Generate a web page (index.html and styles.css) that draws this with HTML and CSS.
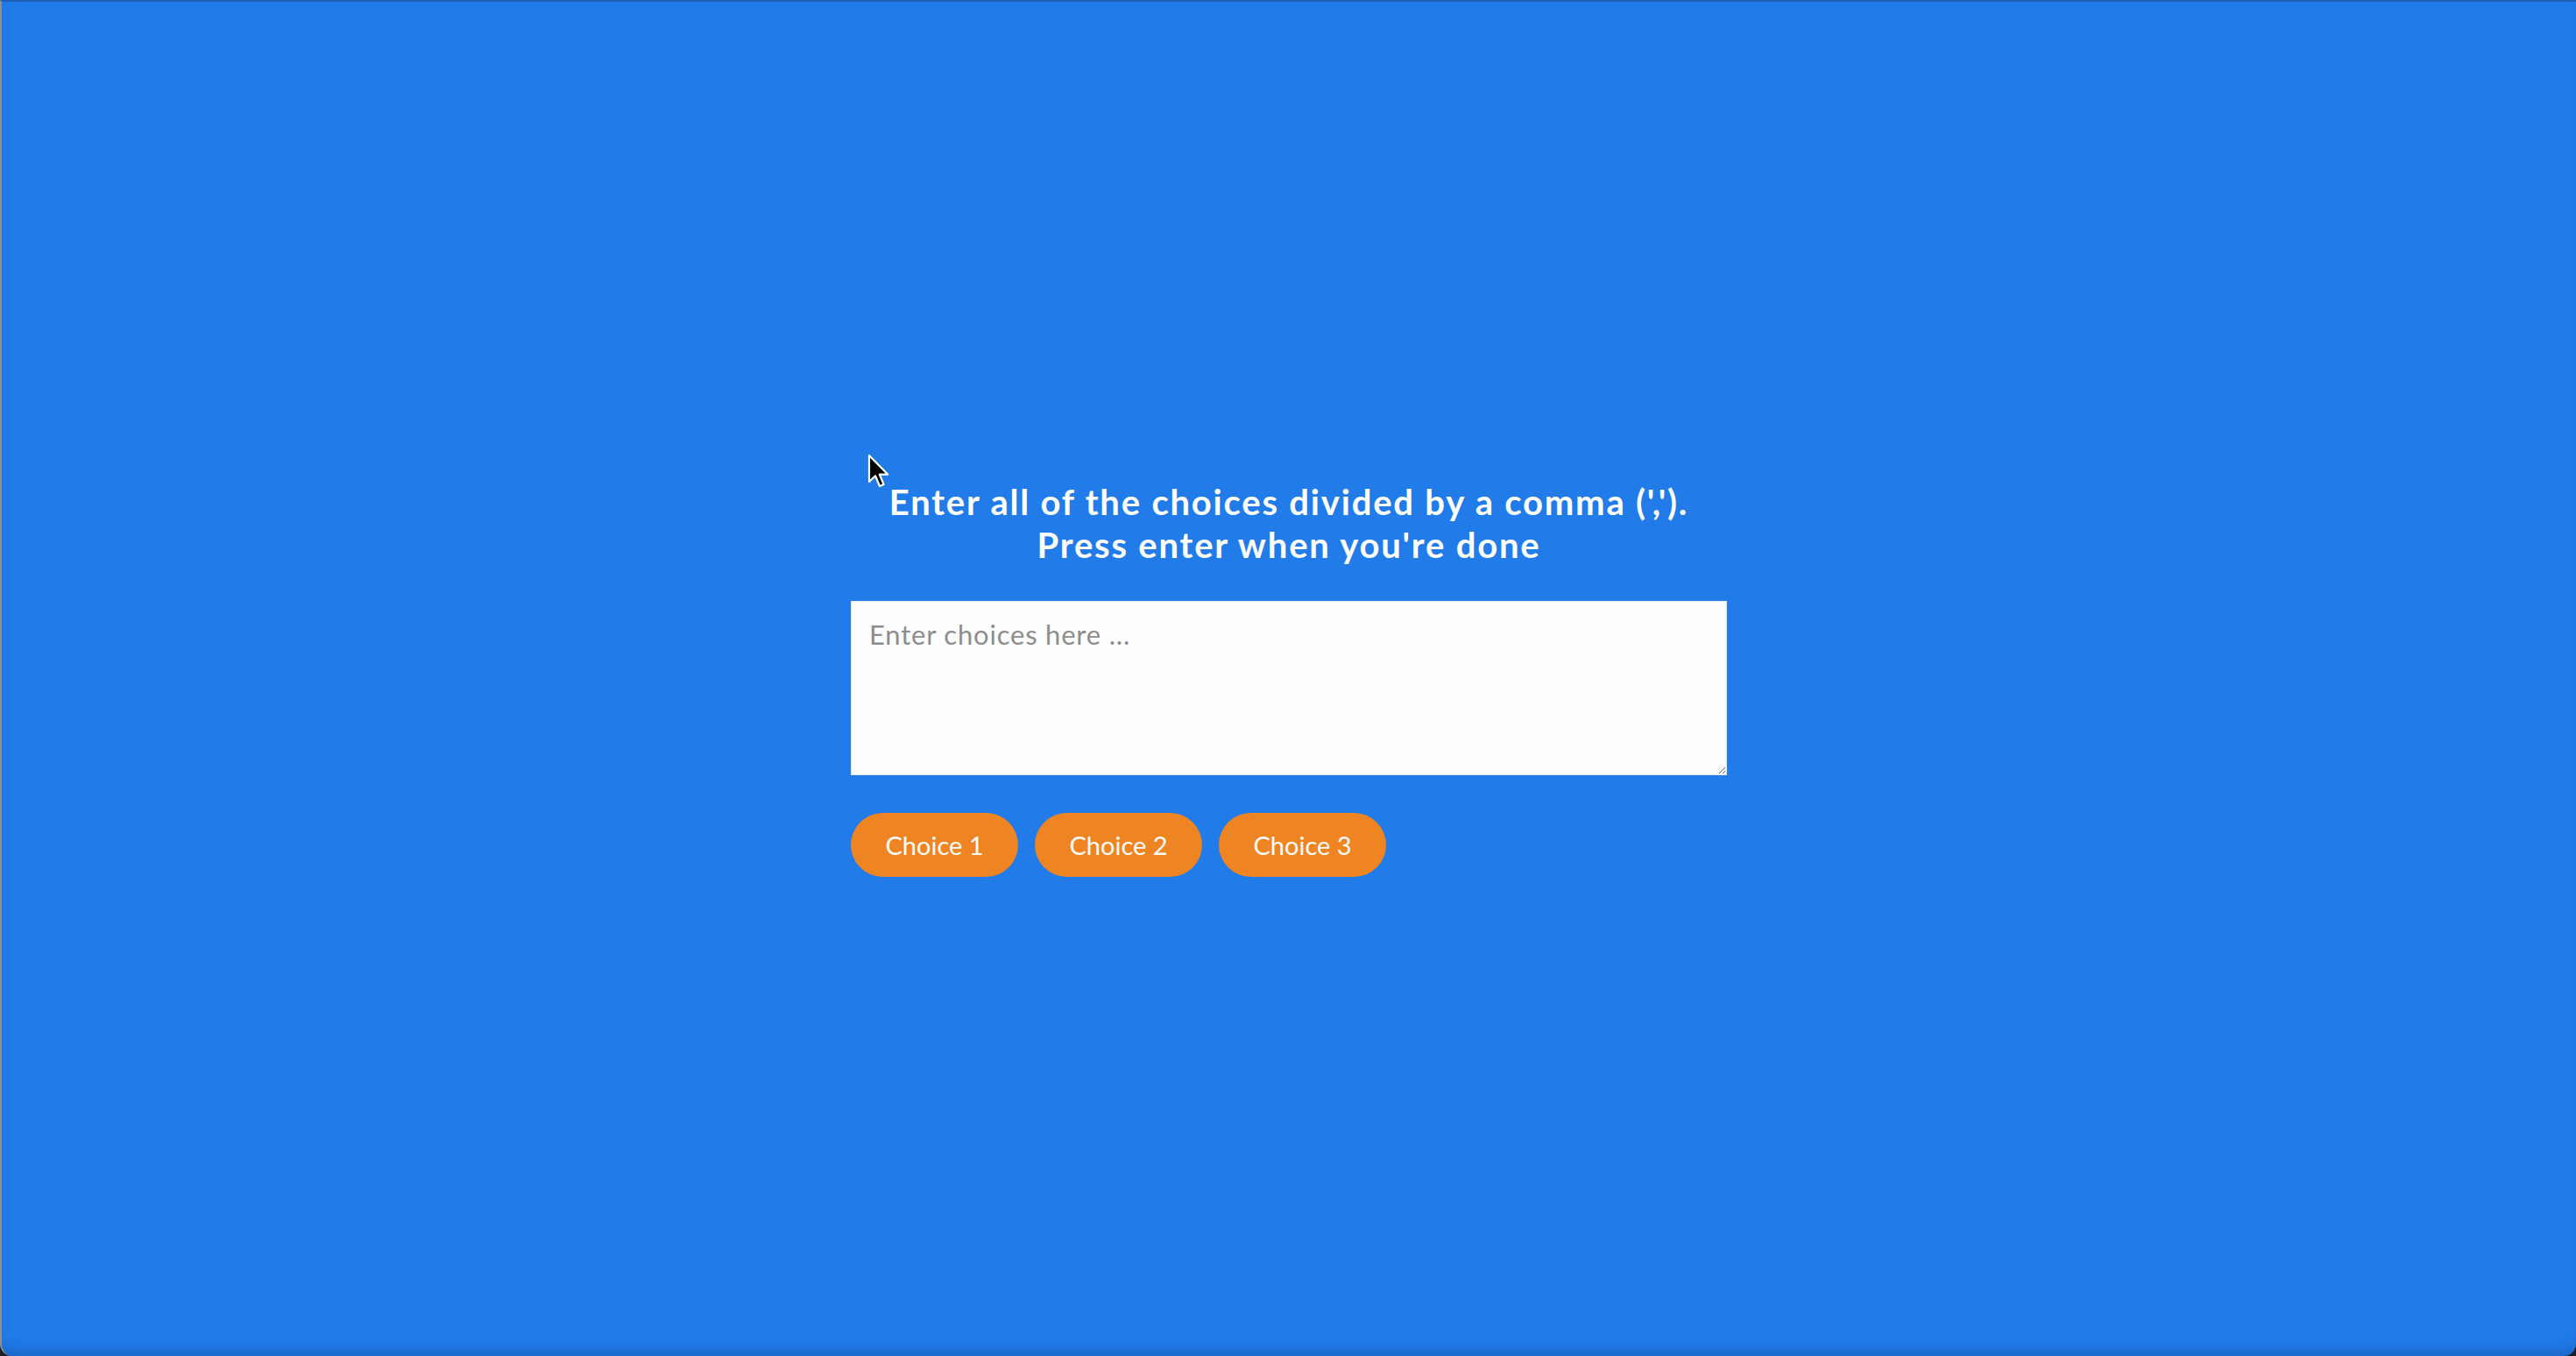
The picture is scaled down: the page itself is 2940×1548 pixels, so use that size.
FILE: index.html
```html
<!DOCTYPE html>
<html lang="en">
<head>
<meta charset="utf-8">
<title>Choices</title>
<link rel="stylesheet" href="styles.css">
</head>
<body>
<div class="screen">
  <main class="panel">
    <h2 class="title">Enter all of the choices divided by a comma (',').<br>Press enter when you're done</h2>
    <textarea class="choices" placeholder="Enter choices here ..."></textarea>
    <div class="tags">
      <span class="tag">Choice 1</span>
      <span class="tag">Choice 2</span>
      <span class="tag">Choice 3</span>
    </div>
  </main>
  <svg class="cursor" width="26" height="40" viewBox="0 0 13 20" aria-hidden="true">
    <path d="M1 1 L1 16 L4.5 12.6 L7 18.5 L9.3 17.5 L6.9 11.8 L11.6 11.8 Z" fill="#000" stroke="#fff" stroke-width="1.1" stroke-linejoin="round"/>
  </svg>
</div>
</body>
</html>
```

FILE: styles.css
```css
html, body {
  margin: 0;
  padding: 0;
  height: 100%;
  background: #1b1f24;
}

.screen {
  position: relative;
  box-sizing: border-box;
  height: 1548px;
  background: #217be9;
  border-top: 2px solid #1d5fb4;
  border-left: 2px solid #8a9099;
  border-radius: 0 0 14px 14px;
  display: flex;
  align-items: center;
  justify-content: center;
  box-shadow: inset 0 -14px 18px -12px rgba(10, 40, 90, 0.35);
  font-family: "Lato", "Open Sans", sans-serif;
}

.panel {
  width: 1000px;
  display: flex;
  flex-direction: column;
}

.title {
  margin: 0 0 39px;
  color: #ffffff;
  font-size: 40px;
  line-height: 49px;
  font-weight: 700;
  letter-spacing: 1.8px;
  text-align: center;
}

.choices {
  box-sizing: border-box;
  width: 1000px;
  height: 199px;
  margin: 0;
  padding: 17px 20px 20px;
  border: 1px solid #e6e6e6;
  background: #fdfdfd;
  font-family: "Lato", "Open Sans", sans-serif;
  font-size: 31px;
  line-height: 40px;
  letter-spacing: 0.8px;
  color: #333;
  resize: vertical;
  outline: none;
}

.choices::placeholder {
  color: #8d8d8d;
}

.tags {
  margin-top: 43px;
  display: flex;
  gap: 19px;
}

.tag {
  box-sizing: border-box;
  height: 73px;
  width: 191px;
  display: flex;
  align-items: center;
  justify-content: center;
  border-radius: 37px;
  background: #ee8522;
  color: #ffffff;
  font-size: 29px;
}

.cursor {
  position: absolute;
  left: 988px;
  top: 516px;
}
```
